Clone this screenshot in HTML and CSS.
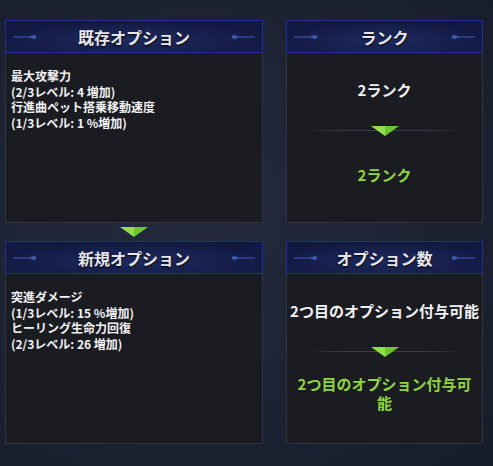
FILE: index.html
```html
<!DOCTYPE html>
<html lang="ja">
<head>
  <meta charset="UTF-8">
  <title>オプション</title>
  <link rel="stylesheet" href="styles.css">
</head>
<body>
  <div class="board">
    <div class="column left">
      <div class="panel">
        <div class="panel-head">
          <svg class="orn" viewBox="0 0 28 8"><path d="M0 4 H18" stroke="#34499e" stroke-width="1.4"/><path d="M16 4 L21 1.8 Q26 4 21 6.2 Z" fill="#4258b0"/></svg>
          <h3>既存オプション</h3>
          <svg class="orn flip" viewBox="0 0 28 8"><path d="M0 4 H18" stroke="#34499e" stroke-width="1.4"/><path d="M16 4 L21 1.8 Q26 4 21 6.2 Z" fill="#4258b0"/></svg>
        </div>
        <div class="panel-body list">
          <p>最大攻撃力</p>
          <p>(2/3レベル: 4 増加)</p>
          <p>行進曲ペット搭乗移動速度</p>
          <p>(1/3レベル: 1 %増加)</p>
        </div>
      </div>
      <div class="gap">
        <svg class="tri" viewBox="0 0 28 10"><path d="M0 0 H14 V10 Z" fill="#8fe04c"/><path d="M14 0 H28 L14 10 Z" fill="#6cc832"/></svg>
      </div>
      <div class="panel">
        <div class="panel-head">
          <svg class="orn" viewBox="0 0 28 8"><path d="M0 4 H18" stroke="#34499e" stroke-width="1.4"/><path d="M16 4 L21 1.8 Q26 4 21 6.2 Z" fill="#4258b0"/></svg>
          <h3>新規オプション</h3>
          <svg class="orn flip" viewBox="0 0 28 8"><path d="M0 4 H18" stroke="#34499e" stroke-width="1.4"/><path d="M16 4 L21 1.8 Q26 4 21 6.2 Z" fill="#4258b0"/></svg>
        </div>
        <div class="panel-body list">
          <p>突進ダメージ</p>
          <p>(1/3レベル: 15 %増加)</p>
          <p>ヒーリング生命力回復</p>
          <p>(2/3レベル: 26 増加)</p>
        </div>
      </div>
    </div>

    <div class="column right">
      <div class="panel">
        <div class="panel-head">
          <svg class="orn" viewBox="0 0 28 8"><path d="M0 4 H18" stroke="#34499e" stroke-width="1.4"/><path d="M16 4 L21 1.8 Q26 4 21 6.2 Z" fill="#4258b0"/></svg>
          <h3>ランク</h3>
          <svg class="orn flip" viewBox="0 0 28 8"><path d="M0 4 H18" stroke="#34499e" stroke-width="1.4"/><path d="M16 4 L21 1.8 Q26 4 21 6.2 Z" fill="#4258b0"/></svg>
        </div>
        <div class="panel-body compare">
          <div class="before">2ランク</div>
          <div class="divider">
            <svg class="tri" viewBox="0 0 28 10"><path d="M0 0 H14 V10 Z" fill="#8fe04c"/><path d="M14 0 H28 L14 10 Z" fill="#6cc832"/></svg>
          </div>
          <div class="after">2ランク</div>
        </div>
      </div>
      <div class="gap"></div>
      <div class="panel">
        <div class="panel-head">
          <svg class="orn" viewBox="0 0 28 8"><path d="M0 4 H18" stroke="#34499e" stroke-width="1.4"/><path d="M16 4 L21 1.8 Q26 4 21 6.2 Z" fill="#4258b0"/></svg>
          <h3>オプション数</h3>
          <svg class="orn flip" viewBox="0 0 28 8"><path d="M0 4 H18" stroke="#34499e" stroke-width="1.4"/><path d="M16 4 L21 1.8 Q26 4 21 6.2 Z" fill="#4258b0"/></svg>
        </div>
        <div class="panel-body compare">
          <div class="before">2つ目のオプション付与可能</div>
          <div class="divider">
            <svg class="tri" viewBox="0 0 28 10"><path d="M0 0 H14 V10 Z" fill="#8fe04c"/><path d="M14 0 H28 L14 10 Z" fill="#6cc832"/></svg>
          </div>
          <div class="after narrow">2つ目のオプション付与可能</div>
        </div>
      </div>
    </div>
  </div>
</body>
</html>
```

FILE: styles.css
```css
* {
  box-sizing: border-box;
}

body {
  margin: 0;
  width: 493px;
  height: 466px;
  overflow: hidden;
  background: radial-gradient(ellipse at 40% 45%, #232a3c 0%, #1c2232 60%, #171c29 100%);
  font-family: "Noto Sans CJK JP", "Noto Sans", sans-serif;
  font-weight: bold;
  color: #f2f2f4;
}

.board {
  display: flex;
  gap: 23px;
  padding: 20px 0 0 5px;
}

.column {
  display: flex;
  flex-direction: column;
}

.left {
  width: 258px;
}

.right {
  width: 197px;
}

.panel {
  display: flex;
  flex-direction: column;
}

.panel-head {
  height: 33px;
  display: flex;
  align-items: center;
  justify-content: space-between;
  padding: 0 7px;
  border: 1px solid #1f2f96;
  background: radial-gradient(ellipse at 50% 60%, #1e2a5e 0%, #17204a00 70%), linear-gradient(#121841, #151c47);
}

.panel-head h3 {
  margin: 0;
  font-size: 16px;
  line-height: 20px;
  color: #e6e6ec;
  text-shadow: 0 1px 2px #000;
}

.orn {
  width: 28px;
  height: 8px;
}

.orn.flip {
  transform: scaleX(-1);
}

.panel-body {
  height: 170px;
  background: #1b1c21;
  border: 1px solid #30343f;
  border-top: none;
}

.list {
  padding: 15px 0 0 5px;
  font-size: 12px;
  line-height: 15.5px;
}

.list p {
  margin: 0;
}

.gap {
  height: 18px;
  display: flex;
  justify-content: center;
  align-items: flex-start;
  padding-top: 4px;
}

.tri {
  display: block;
  width: 28px;
  height: 10px;
}

.compare {
  display: flex;
  flex-direction: column;
  align-items: center;
  text-align: center;
  font-size: 15px;
  line-height: 19px;
}

.before {
  margin-top: 27px;
}

.divider {
  width: 152px;
  height: 1px;
  background: linear-gradient(90deg, #2a2d3500, #3a3d47 20%, #3a3d47 80%, #2a2d3500);
  margin-top: 31px;
  display: flex;
  justify-content: center;
}

.divider .tri {
  margin-top: -4px;
}

.after {
  margin-top: 34px;
  color: #8fd641;
}

.narrow {
  margin-top: 22px;
  padding: 0 8px;
}
```
